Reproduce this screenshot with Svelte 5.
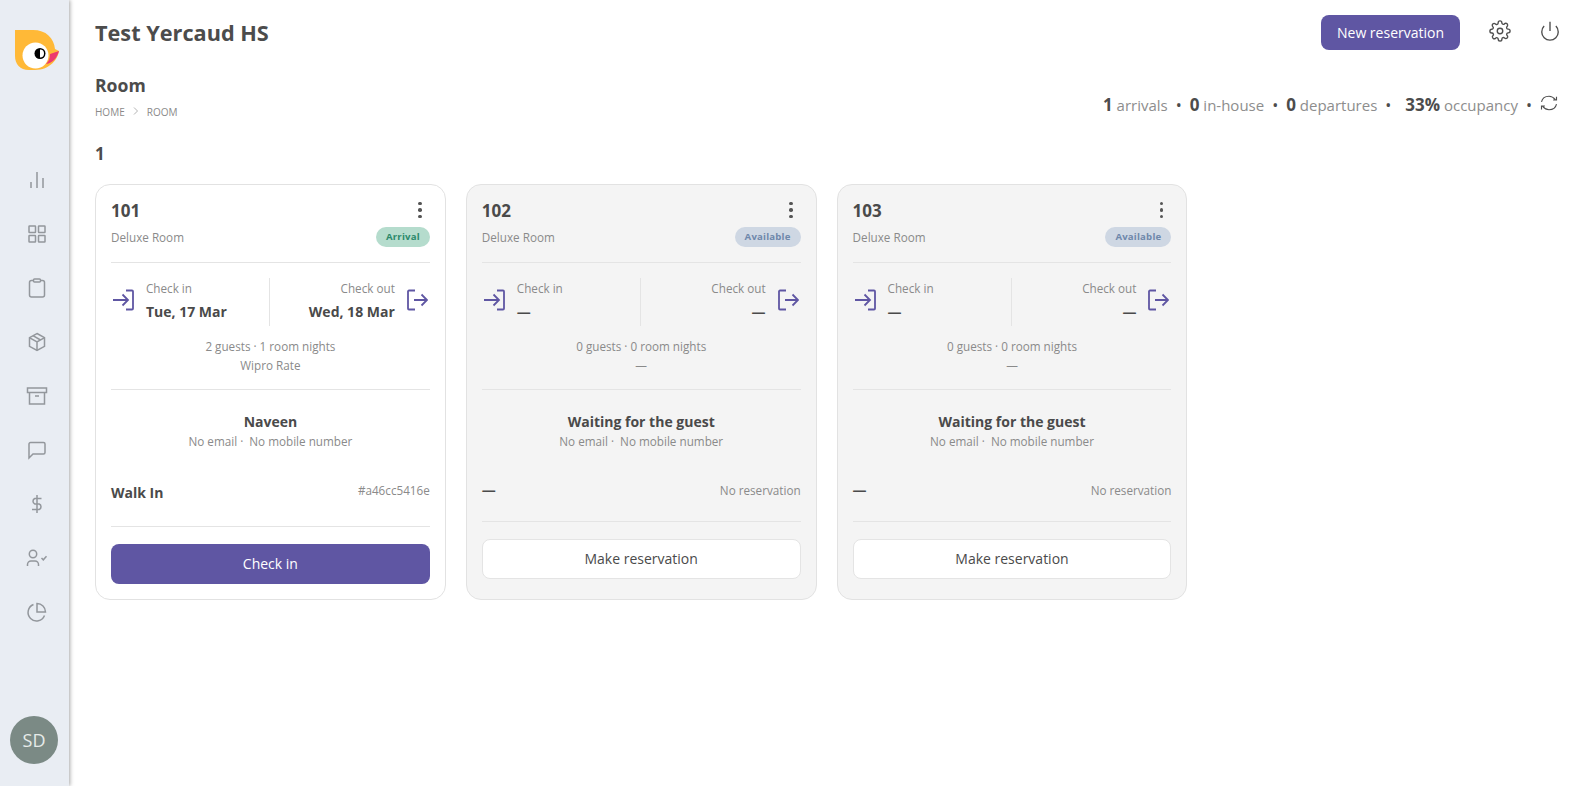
<script>
	// Room cards
	const rooms = [
		{
			no: '101', status: 'Arrival', free: false, checkIn: 'Tue, 17 Mar', checkOut: 'Wed, 18 Mar',
			stay: '2 guests · 1 room nights', rate: 'Wipro Rate', guest: 'Naveen', source: 'Walk In', ref: '#a46cc5416e'
		},
		{
			no: '102', status: 'Available', free: true, checkIn: '—', checkOut: '—',
			stay: '0 guests · 0 room nights', rate: '—', guest: 'Waiting for the guest', source: '—', ref: 'No reservation'
		},
		{
			no: '103', status: 'Available', free: true, checkIn: '—', checkOut: '—',
			stay: '0 guests · 0 room nights', rate: '—', guest: 'Waiting for the guest', source: '—', ref: 'No reservation'
		}
	];

	// Sidebar icons, all on a 24 box
	const navIcons = [
		'<path d="M12 20V4M18 20v-10M6 20v-6"/>',
		'<rect x="4" y="4" width="6.5" height="6.5" rx=".5"/><rect x="13.5" y="4" width="6.5" height="6.5" rx=".5"/><rect x="4" y="13.5" width="6.5" height="6.5" rx=".5"/><rect x="13.5" y="13.5" width="6.5" height="6.5" rx=".5"/>',
		'<path d="M8.5 4.5H6.5a2 2 0 0 0-2 2V19a2 2 0 0 0 2 2h11a2 2 0 0 0 2-2V6.5a2 2 0 0 0-2-2H15.5"/><rect x="8.5" y="3" width="7" height="3" rx="1"/>',
		'<path d="M12 3.5l7.5 4.2v8.6L12 20.5l-7.5-4.2V7.7z"/><path d="M4.8 7.8L12 12l7.2-4.2M12 20.5V12M8 5.7l7.5 4.3"/>',
		'<path d="M2.5 4h19v4.5h-19zM4.5 8.5V20h15V8.5M10 12h4"/>',
		'<path d="M20 14.5a1.5 1.5 0 0 1-1.5 1.5H8l-4 4V6a1.5 1.5 0 0 1 1.5-1.5h13A1.5 1.5 0 0 1 20 6z"/>',
		'<path d="M12 3v18M16.5 6.5H9.8a3 3 0 0 0 0 5.5h4.4a3 3 0 0 1 0 5.5H7"/>',
		'<path d="M13.5 20v-1.5a3.5 3.5 0 0 0-3.5-3.5H6a3.5 3.5 0 0 0-3.5 3.5V20"/><circle cx="8" cy="8" r="3.7"/><path d="M16.5 12l1.8 1.8 3.2-3.5"/>',
		'<path d="M19.5 15.5A8.5 8.5 0 1 1 8.5 4.5"/><path d="M20.5 12A8.5 8.5 0 0 0 12 3.5V12z"/>'
	];
</script>

<div class="page">
	<aside class="sidebar">
		<svg class="logo" viewBox="0 0 44 40" width="44" height="40">
			<path d="M0 0H18C31 0 39 8 40 19L44 21C43 29 35 40 20 40H14C5 40 0 34 0 26Z" fill="#ffb937"/>
			<circle cx="20.5" cy="25.5" r="13" fill="#fff"/>
			<path d="M44 21L35 24C35 28 34 31 31 34C38 33 42 28 44 21Z" fill="#ec3a6e"/>
			<circle cx="25" cy="23.5" r="5.5" fill="#000"/>
			<path d="M25 19.5a4 4 0 0 1 0 8z" fill="#fff"/>
		</svg>
		<nav class="nav">
			{#each navIcons as icon}
				<svg class="nav-icon" viewBox="0 0 24 24" width="24" height="24">{@html icon}</svg>
			{/each}
		</nav>
		<div class="avatar">SD</div>
	</aside>

	<main class="main">
		<header class="topbar">
			<h1>Test Yercaud HS</h1>
			<div class="top-actions">
				<button class="new-btn">New reservation</button>
				<svg class="top-icon" viewBox="0 0 24 24" width="22" height="22">
					<circle cx="12" cy="12" r="3"/>
					<path d="M19.4 15a1.65 1.65 0 0 0 .33 1.82l.06.06a2 2 0 1 1-2.83 2.83l-.06-.06a1.65 1.65 0 0 0-2.82 1.17V21a2 2 0 1 1-4 0v-.09a1.65 1.65 0 0 0-2.85-1.12l-.06.06a2 2 0 1 1-2.83-2.83l.06-.06a1.65 1.65 0 0 0-1.17-2.82H3a2 2 0 1 1 0-4h.09a1.65 1.65 0 0 0 1.12-2.85l-.06-.06a2 2 0 1 1 2.83-2.83l.06.06a1.65 1.65 0 0 0 1.82.33H9a1.65 1.65 0 0 0 1-1.51V3a2 2 0 1 1 4 0v.09a1.65 1.65 0 0 0 2.82 1.17l.06-.06a2 2 0 1 1 2.83 2.83l-.06.06a1.65 1.65 0 0 0-.33 1.82V9a1.65 1.65 0 0 0 1.51 1H21a2 2 0 1 1 0 4h-.09a1.65 1.65 0 0 0-1.51 1z"/>
				</svg>
				<svg class="top-icon" viewBox="0 0 24 24" width="22" height="22">
					<path d="M18.4 6.6a9 9 0 1 1-12.8 0M12 2v10"/>
				</svg>
			</div>
		</header>

		<div class="subbar">
			<div>
				<h2>Room</h2>
				<div class="crumbs">
					<span>HOME</span>
					<svg viewBox="0 0 10 10" width="10" height="10"><path d="M3 1.5L6.5 5 3 8.5"/></svg>
					<span>ROOM</span>
				</div>
			</div>
			<div class="stats">
				<span><b>1</b> arrivals</span><i>•</i>
				<span><b>0</b> in-house</span><i>•</i>
				<span><b>0</b> departures</span><i>•</i>
				<span class="occ"><b>33%</b> occupancy</span><i>•</i>
				<svg viewBox="0 0 24 24" width="18" height="18">
					<path d="M2 10.5C3 6 7 3 12 3c3.5 0 6 1.5 8.5 4.5M22 3.5v4.5h-4.5M22 13.5C21 18 17 21 12 21c-3.5 0-6-1.5-8.5-4.5M2 20.5V16h4.5"/>
				</svg>
			</div>
		</div>

		<h3 class="floor">1</h3>

		<section class="cards">
			{#each rooms as room}
				<article class="card" class:free={room.free}>
					<div class="card-head">
						<div class="head-row">
							<strong class="room-no">{room.no}</strong>
							<span class="dots"><span></span><span></span><span></span></span>
						</div>
						<div class="head-row sub">
							<span class="room-type">Deluxe Room</span>
							<span class="badge" class:free={room.free}>{room.status}</span>
						</div>
					</div>

					<div class="dates">
						<div class="date">
							<svg class="door" viewBox="0 0 22 22" width="22" height="22">
								<path d="M14 1.5h6a1 1 0 0 1 1 1v17a1 1 0 0 1-1 1h-6M1 11h15M10.5 5.5l5.5 5.5-5.5 5.5"/>
							</svg>
							<div>
								<div class="date-label">Check in</div>
								<div class="date-value">{room.checkIn}</div>
							</div>
						</div>
						<div class="date right">
							<div>
								<div class="date-label">Check out</div>
								<div class="date-value">{room.checkOut}</div>
							</div>
							<svg class="door" viewBox="0 0 22 22" width="22" height="22">
								<path d="M9 1.5H3a1 1 0 0 0-1 1v17a1 1 0 0 0 1 1h6M8 11h13M15.5 5.5l5.5 5.5-5.500 5.500"/>
							</svg>
						</div>
					</div>

					<div class="stay">
						<div>{room.stay}</div>
						<div>{room.rate}</div>
					</div>

					<div class="guest">
						<div class="guest-name">{room.guest}</div>
						<div class="guest-contact">No email <span>·</span>&nbsp; No mobile number</div>
					</div>

					<div class="source" class:free={room.free}>
						<strong>{room.source}</strong>
						<span>{room.ref}</span>
					</div>

					{#if room.free}
						<button class="card-btn plain">Make reservation</button>
					{:else}
						<button class="card-btn primary">Check in</button>
					{/if}
				</article>
			{/each}
		</section>
	</main>
</div>

<style>
	:global(body) {
		margin: 0;
		background: #fff;
		font-family: 'Open Sans', sans-serif;
		color: #4a4a4a;
	}

	.page {
		display: flex;
		height: 786px;
		overflow: hidden;
	}

	/* Sidebar */
	.sidebar {
		flex: 0 0 69px;
		display: flex;
		flex-direction: column;
		align-items: center;
		background: #e9edf3;
		box-shadow: 1px 0 4px rgba(0, 0, 0, 0.35);
		z-index: 1;
	}

	.logo {
		margin-top: 30px;
		margin-left: 5px;
	}

	.nav {
		display: flex;
		flex-direction: column;
		align-items: center;
		gap: 30px;
		margin-top: 98px;
		margin-left: 4px;
	}

	.nav-icon {
		display: block;
		fill: none;
		stroke: #93979c;
		stroke-width: 1.5;
	}

	.avatar {
		display: flex;
		align-items: center;
		justify-content: center;
		width: 48px;
		height: 48px;
		margin-top: auto;
		margin-bottom: 22px;
		margin-right: 1px;
		border-radius: 50%;
		background: #7b8a85;
		color: #e6ebe9;
		font-size: 18px;
	}

	/* Main column */
	.main {
		flex: 1;
		min-width: 0;
		padding: 15px 25px 0 26px;
	}

	.topbar {
		display: flex;
		align-items: center;
		justify-content: space-between;
		height: 35px;
	}

	h1 {
		margin: 0;
		font-size: 21.7px;
		font-weight: 700;
		color: #4c4c4c;
	}

	.top-actions {
		display: flex;
		align-items: center;
		gap: 28px;
		margin-right: -9px;
	}

	.new-btn {
		width: 139px;
		height: 35px;
		margin-right: 1px;
		border: none;
		border-radius: 8px;
		background: #5f56a3;
		color: #fff;
		font-family: inherit;
		font-size: 14px;
	}

	.top-icon {
		fill: none;
		stroke: #4f4f4f;
		stroke-width: 1.5;
		margin-top: -3px;
	}

	.subbar {
		display: flex;
		align-items: flex-end;
		justify-content: space-between;
		margin-top: 23px;
	}

	h2 {
		margin: 0;
		font-size: 17.6px;
		line-height: 24px;
		font-weight: 700;
		color: #4c4c4c;
	}

	.crumbs {
		display: flex;
		align-items: center;
		gap: 6px;
		margin-top: 8px;
		font-size: 10px;
		line-height: 14px;
		color: #8a8a8a;
	}

	.crumbs svg {
		fill: none;
		stroke: #a0a0a0;
		stroke-width: 0.8;
		margin-top: -3px;
	}

	.stats {
		display: flex;
		align-items: center;
		gap: 8px;
		margin-right: -6px;
		margin-bottom: 4px;
		font-size: 15px;
		line-height: 20px;
		color: #8d8d8d;
	}

	.stats b {
		font-size: 17px;
		font-weight: 700;
		color: #4c4c4c;
	}

	.stats i {
		font-style: normal;
		color: #4c4c4c;
		font-size: 16px;
	}

	.stats .occ {
		margin-left: 6px;
	}

	.stats svg {
		fill: none;
		stroke: #4f4f4f;
		stroke-width: 1.5;
		margin-top: -5px;
	}

	.floor {
		margin: 24px 0 0;
		font-size: 17px;
		line-height: 22px;
		font-weight: 700;
		color: #4c4c4c;
	}

	/* Cards */
	.cards {
		display: flex;
		gap: 20px;
		margin-top: 19px;
	}

	.card {
		box-sizing: border-box;
		width: 350.8px;
		padding: 15px;
		border: 1px solid #e2e2e2;
		border-radius: 15px;
		background: #fff;
	}

	.card.free {
		background: #f4f4f4;
	}

	.card-head {
		padding-bottom: 15px;
		border-bottom: 1px solid #e4e4e4;
	}

	.head-row {
		display: flex;
		align-items: center;
		justify-content: space-between;
		height: 22px;
	}

	.head-row.sub {
		margin-top: 5px;
		height: 20px;
	}

	.room-no {
		margin-top: -2px;
		font-size: 17px;
		font-weight: 700;
		color: #4a4a4a;
	}

	.dots {
		display: flex;
		flex-direction: column;
		gap: 3px;
		margin-top: -2px;
		margin-right: 8px;
	}

	.dots span {
		width: 3.5px;
		height: 3.5px;
		border-radius: 50%;
		background: #555;
	}

	.room-type {
		font-size: 11.7px;
		color: #8a8a8a;
	}

	.badge {
		padding: 0 10px;
		height: 20px;
		line-height: 20px;
		border-radius: 10px;
		background: #b5dccd;
		color: #2b8a6b;
		font-size: 9.6px;
		font-weight: 700;
		letter-spacing: 0.2px;
	}

	.badge.free {
		background: #ced7e3;
		color: #6f88ab;
	}

	.dates {
		display: flex;
		margin-top: 15px;
		height: 48px;
	}

	.date {
		flex: 0 0 158px;
		display: flex;
		align-items: center;
		gap: 12px;
		padding-left: 1px;
		padding-bottom: 3px;
		box-sizing: border-box;
	}

	.date.right {
		flex: 1;
		justify-content: flex-end;
		text-align: right;
		gap: 11px;
		padding-left: 0;
		padding-right: 2px;
		border-left: 1px solid #e4e4e4;
	}

	.door {
		flex: none;
		fill: none;
		stroke: #5f56a3;
		stroke-width: 1.8;
		margin-top: -1px;
	}

	.date-label {
		font-size: 11.7px;
		line-height: 16px;
		color: #8a8a8a;
	}

	.date-value {
		margin-top: 6px;
		font-size: 14px;
		line-height: 20px;
		font-weight: 700;
		color: #4a4a4a;
	}

	.stay {
		margin-top: 11px;
		padding-bottom: 14px;
		border-bottom: 1px solid #e4e4e4;
		text-align: center;
		font-size: 11.7px;
		line-height: 19px;
		color: #8a8a8a;
	}

	.guest {
		margin-top: 22px;
		text-align: center;
	}

	.guest-name {
		font-size: 14px;
		line-height: 20px;
		font-weight: 700;
		color: #4a4a4a;
	}

	.guest-contact {
		font-size: 11.7px;
		line-height: 20px;
		margin-top: -1px;
		padding-bottom: 1px;
		color: #8a8a8a;
	}

	.source {
		display: flex;
		align-items: flex-start;
		justify-content: space-between;
		margin-top: 31px;
		height: 43px;
		border-bottom: 1px solid #e4e4e4;
		font-size: 11.7px;
		color: #8a8a8a;
	}

	.source.free {
		height: 38px;
	}

	.source strong {
		font-size: 14px;
		line-height: 20px;
		font-weight: 700;
		color: #4a4a4a;
	}

	.source span {
		margin-top: -1px;
		line-height: 16px;
	}

	.source.free strong {
		margin-top: -3px;
	}

	.card-btn {
		display: block;
		width: 100%;
		height: 40px;
		margin-top: 17px;
		padding-bottom: 2px;
		font-family: inherit;
		font-size: 14px;
		border-radius: 8px;
	}

	.card-btn.primary {
		border: none;
		background: #5f56a3;
		color: #fff;
	}

	.card-btn.plain {
		border: 1px solid #e4e4e4;
		background: #fff;
		color: #4a4a4a;
	}
</style>
